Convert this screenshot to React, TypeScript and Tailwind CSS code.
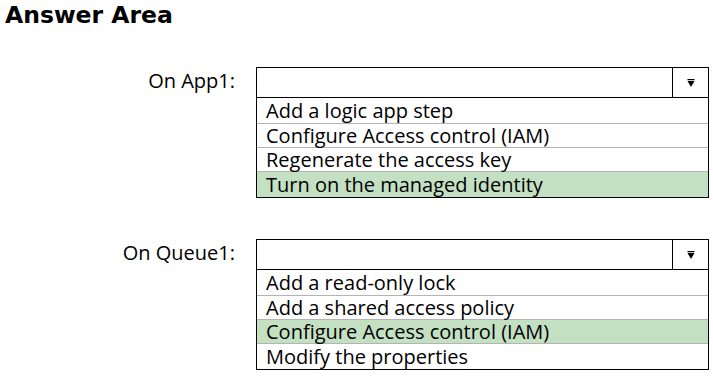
const groups = [
  {
    label: 'On App1:',
    options: [
      'Add a logic app step',
      'Configure Access control (IAM)',
      'Regenerate the access key',
      'Turn on the managed identity',
    ],
    answer: 3,
  },
  {
    label: 'On Queue1:',
    options: [
      'Add a read-only lock',
      'Add a shared access policy',
      'Configure Access control (IAM)',
      'Modify the properties',
    ],
    answer: 2,
  },
]

const rowHeights = ['h-[26px]', 'h-[24px]', 'h-[24px]', 'h-[25px]']

function Arrow() {
  return (
    <svg width="8" height="8" viewBox="0 0 8 8">
      <rect x="0.5" y="0" width="7" height="1.2" fill="#000" />
      <polygon points="0.5,2 7.5,2 4,8" fill="#000" />
    </svg>
  )
}

export default function App() {
  return (
    <div className="w-[713px] h-[377px] bg-white text-black overflow-hidden font-['Open_Sans','Noto_Sans',sans-serif]">
      <div className="pl-[5px] pt-[1px] h-[67px] font-['DejaVu_Sans',sans-serif] font-bold text-[23.5px] leading-[28px]">
        Answer Area
      </div>

      <div className="flex flex-col gap-[41px]">
        {groups.map((g) => (
          <div key={g.label} className="flex items-start">
            <div className="w-[235px] h-[28px] flex items-center justify-end text-[20px] leading-[22px]">
              {g.label}
            </div>
            <div className="ml-[21px] w-[453px] border border-black">
              <div className="flex h-[30px] border-b border-black">
                <div className="flex-1" />
                <div className="w-[36px] border-l border-black flex items-center justify-center">
                  <Arrow />
                </div>
              </div>
              {g.options.map((o, i) => (
                <div
                  key={o}
                  className={`${rowHeights[i]} flex items-center px-[9px] whitespace-nowrap ${
                    i < g.options.length - 1 ? 'border-b border-[#b4b4b4]' : ''
                  } ${i === g.answer ? 'bg-[#c4e0c3]' : ''}`}
                >
                  <span className="text-[20px] leading-[20px]">{o}</span>
                </div>
              ))}
            </div>
          </div>
        ))}
      </div>
    </div>
  )
}
